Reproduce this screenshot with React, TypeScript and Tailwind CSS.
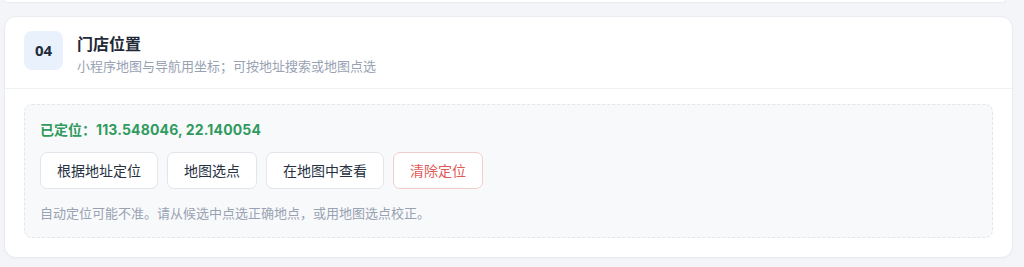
const FONT = { fontFamily: '"Noto Sans", "Noto Sans CJK SC", sans-serif' };

const ACTIONS = ['根据地址定位', '地图选点', '在地图中查看'];

export default function App() {
  return (
    <div className="w-[1024px] h-[267px] bg-[#f3f5f8] overflow-hidden" style={FONT}>
      {/* previous card, just its bottom edge */}
      <div className="ml-[4px] mr-[18px] h-[3px] bg-white border-b border-x border-[#e9ecf1] rounded-b-[10px]" />

      <section className="mt-[13px] ml-[4px] mr-[11px] bg-white border border-[#e9ecf1] rounded-[12px] shadow-[0_1px_2px_rgba(15,23,42,0.03)]">
        {/* Header */}
        <div className="flex items-start gap-[14px] px-[19px] pt-[14px] pb-[12px] border-b border-[#eef0f3]">
          <div className="w-[39px] h-[39px] shrink-0 rounded-[8px] bg-[#e9f2fc] flex items-center justify-center text-[15px] font-bold text-[#1e2b3d]">
            04
          </div>
          <div className="flex flex-col pt-[1px]">
            <h3 className="text-[16px] leading-[24px] font-bold text-[#1f2937]">门店位置</h3>
            <p className="text-[13px] leading-[19px] text-[#98a2b3] mt-[1px]">
              小程序地图与导航用坐标；可按地址搜索或地图点选
            </p>
          </div>
        </div>

        {/* Body */}
        <div className="px-[19px] pt-[15px] pb-[19px]">
          <div className="bg-[#f8f9fb] border border-dashed border-[#e3e6eb] rounded-[8px] px-[15px] pt-[15px] pb-[15px]">
            <div className="text-[14px] leading-[20px] font-bold text-[#309a5f]">
              已定位：<span className="font-['Inter'] tracking-[0.15px]">113.548046, 22.140054</span>
            </div>
            <div className="flex gap-[9px] mt-[12px]">
              {ACTIONS.map((a) => (
                <button
                  key={a}
                  className="h-[37px] px-[16px] bg-white border border-[#e2e5ea] rounded-[7px] text-[14px] text-[#273142]"
                >
                  {a}
                </button>
              ))}
              <button className="h-[37px] px-[16px] bg-white border border-[#f3cccc] rounded-[7px] text-[14px] text-[#e05a5a]">
                清除定位
              </button>
            </div>
            <p className="mt-[15px] text-[13px] leading-[18px] text-[#98a2b3]">
              自动定位可能不准。请从候选中点选正确地点，或用地图选点校正。
            </p>
          </div>
        </div>
      </section>
    </div>
  );
}
